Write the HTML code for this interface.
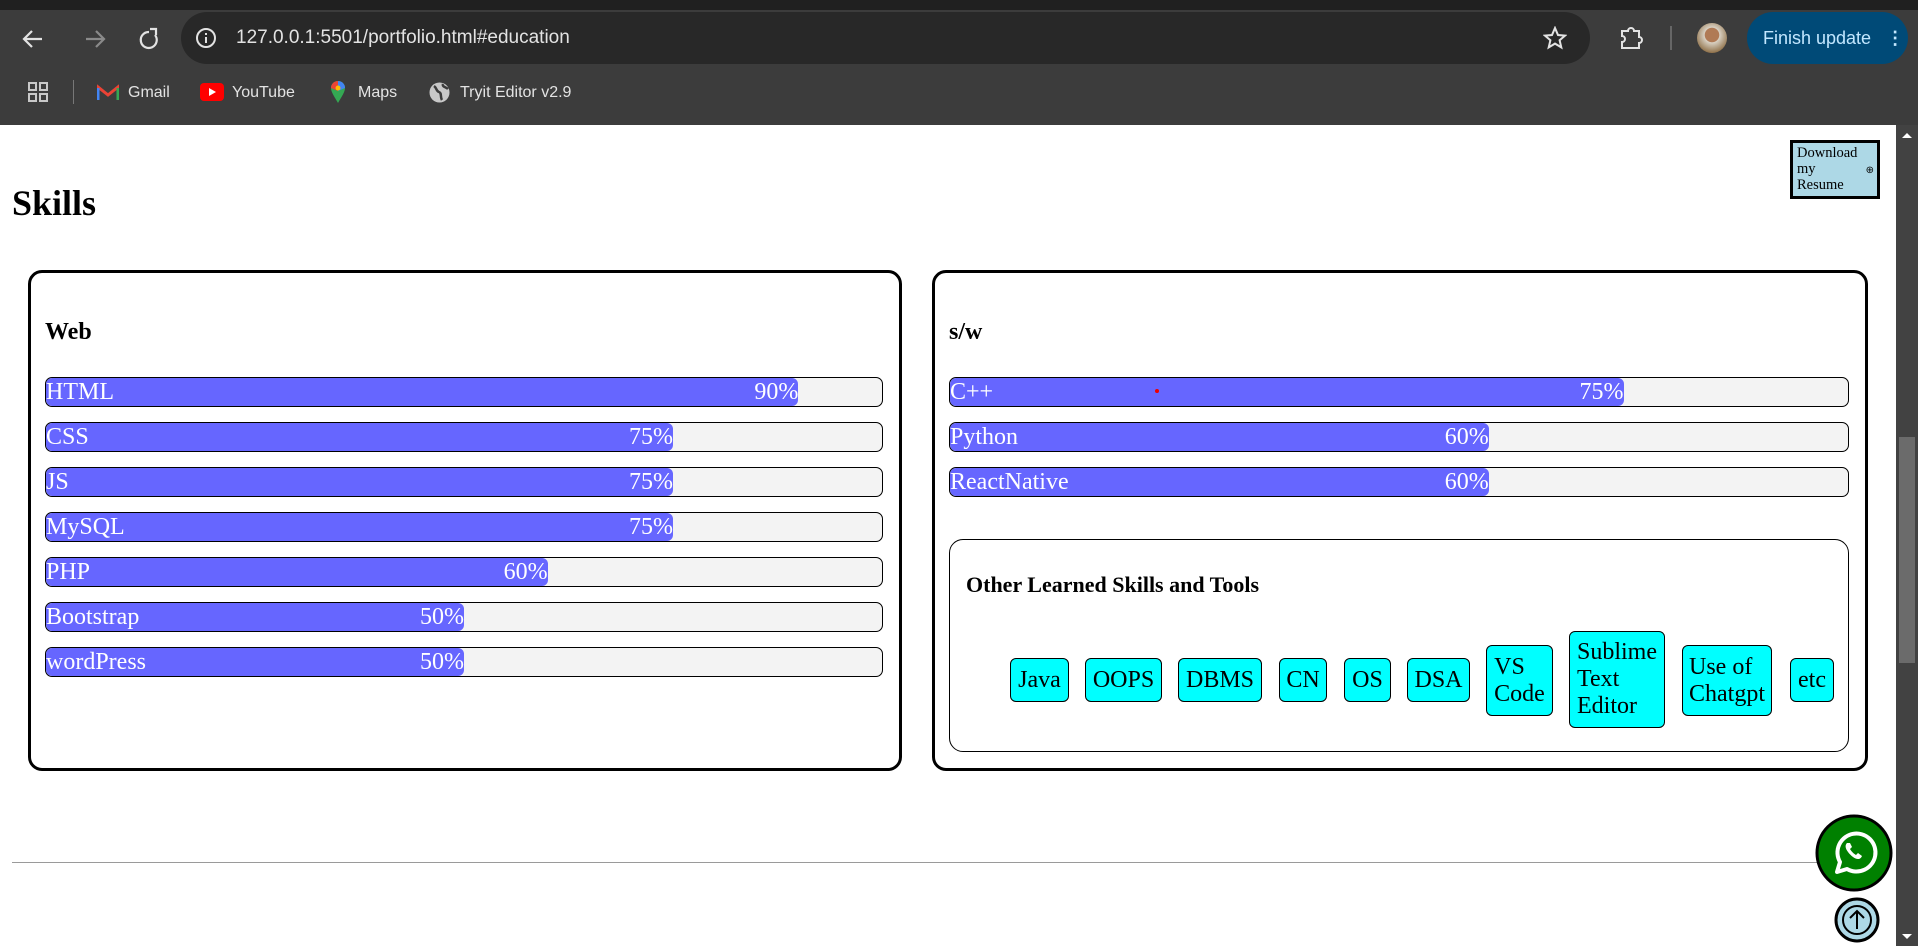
<!DOCTYPE html>
<html><head><meta charset="utf-8"><style>
*{box-sizing:border-box;margin:0;padding:0}
body{width:1918px;height:946px;overflow:hidden;background:#fff;font-family:"Liberation Serif",serif;position:relative}
.abs{position:absolute}
.chrome{left:0;top:0;width:1918px;height:125px;background:#3c3c3c}
.tabstrip{left:0;top:0;width:1918px;height:10px;background:#202020}
.omni{left:181px;top:12px;width:1409px;height:52px;border-radius:26px;background:#282828}
.url{left:236px;top:27px;color:#e3e3e3;font-family:"Liberation Sans",sans-serif;font-size:19px}
.bm{top:84px;color:#e3e3e3;font-family:"Liberation Sans",sans-serif;font-size:16px}
.upd{left:1747px;top:12px;width:161px;height:52px;border-radius:26px;background:#004a77;color:#c2e7ff;font-family:"Liberation Sans",sans-serif;font-size:18px;line-height:52px;padding-left:16px}
.card{border:3px solid #000;border-radius:14px;top:270px;height:501px}
.bar{height:30px;border:1px solid #000;border-radius:7px;background:#f3f3f3;overflow:hidden}
.fill{height:100%;background:#6666ff;color:#fff;font-size:24px;line-height:29px;position:relative;border-radius:6px 6px 6px 6px}
.fill .l{position:absolute;left:0;top:0}
.fill .r{position:absolute;right:0;top:0}
.tag{background:#00ffff;border:1px solid #000;border-radius:6px;font-size:24px;line-height:27px;display:flex;align-items:center;justify-content:center;text-align:left;padding:0 6px}
</style></head><body>
<div class="abs chrome"></div>
<div class="abs tabstrip"></div>
<svg class="abs" style="left:20px;top:26px" width="160" height="26" viewBox="0 0 160 26">
<path d="M22 13H4M12 5l-8 8 8 8" stroke="#e3e3e3" stroke-width="2.2" fill="none"/>
<path d="M66 13h18M76 5l8 8-8 8" stroke="#8a8a8a" stroke-width="2.2" fill="none"/>
<path d="M129 6a8 8 0 1 0 6 3" stroke="#e3e3e3" stroke-width="2.2" fill="none"/><path d="M130 3h6v6" stroke="#e3e3e3" stroke-width="2.2" fill="none"/>
</svg>
<div class="abs omni"></div>
<svg class="abs" style="left:195px;top:27px" width="22" height="22"><circle cx="11" cy="11" r="9" stroke="#e3e3e3" stroke-width="2" fill="none"/><path d="M11 10v6M11 6v2" stroke="#e3e3e3" stroke-width="2"/></svg>
<div class="abs url">127.0.0.1:5501/portfolio.html#education</div>
<svg class="abs" style="left:1543px;top:26px" width="24" height="24"><path d="M12 2l3 7 7 .6-5.4 4.6 1.7 7.2L12 17.6 5.7 21.4l1.7-7.2L2 9.6 9 9z" stroke="#e3e3e3" stroke-width="2" fill="none"/></svg>
<svg class="abs" style="left:1618px;top:25px" width="26" height="26"><path d="M4 6h6a3 3 0 0 1 6 0h5v6a3 3 0 0 1 0 6v5H4v-6a3 3 0 0 0 0-6z" stroke="#e3e3e3" stroke-width="2" fill="none"/></svg>
<div class="abs" style="left:1670px;top:26px;width:2px;height:24px;background:#666"></div>
<div class="abs" style="left:1697px;top:23px;width:30px;height:30px;border-radius:50%;background:radial-gradient(circle at 50% 40%,#b07a55 0 30%,#d9d1c4 32%,#8a6a40 80%)"></div>
<div class="abs upd">Finish update <span style="margin-left:10px;font-weight:bold">⋮</span></div>
<svg class="abs" style="left:28px;top:82px" width="20" height="20"><g fill="none" stroke="#c8c8c8" stroke-width="2"><rect x="1" y="1" width="7" height="7"/><rect x="12" y="1" width="7" height="7"/><rect x="1" y="12" width="7" height="7"/><rect x="12" y="12" width="7" height="7"/></g></svg>
<div class="abs" style="left:73px;top:80px;width:1px;height:24px;background:#777"></div>
<svg class="abs" style="left:97px;top:84px" width="22" height="17"><path d="M1 16V3l10 8 10-8v13" fill="none" stroke="#ea4335" stroke-width="3"/><path d="M1 16V4" stroke="#4285f4" stroke-width="3"/><path d="M21 16V4" stroke="#34a853" stroke-width="3"/></svg>
<div class="abs bm" style="left:128px">Gmail</div>
<svg class="abs" style="left:200px;top:83px" width="24" height="18"><rect width="24" height="18" rx="4" fill="#f00"/><path d="M9 5v8l7-4z" fill="#fff"/></svg>
<div class="abs bm" style="left:232px">YouTube</div>
<svg class="abs" style="left:330px;top:80px" width="16" height="24"><path d="M8 23C4 16 1 12 1 8a7 7 0 0 1 14 0c0 4-3 8-7 15z" fill="#34a853"/><path d="M1 8a7 7 0 0 1 7-7v10z" fill="#ea4335"/><path d="M15 8a7 7 0 0 0-7-7v10z" fill="#4285f4"/><circle cx="8" cy="8" r="2.5" fill="#fbbc04"/></svg>
<div class="abs bm" style="left:358px">Maps</div>
<svg class="abs" style="left:429px;top:82px" width="21" height="21"><circle cx="10.5" cy="10.5" r="10" fill="#c8c8c8"/><path d="M5 4c3 2 2 5 5 6s1 5 3 8M14 2c-1 3 3 3 5 5" stroke="#3c3c3c" stroke-width="2.5" fill="none"/></svg>
<div class="abs bm" style="left:460px">Tryit Editor v2.9</div>

<div class="abs" style="left:1896px;top:125px;width:22px;height:821px;background:#424242"></div>
<div class="abs" style="left:1899px;top:437px;width:16px;height:226px;background:#6b6b6b"></div>
<svg class="abs" style="left:1900px;top:130px" width="14" height="10"><path d="M2 8h10L7 3z" fill="#fff"/></svg>
<svg class="abs" style="left:1900px;top:932px" width="14" height="10"><path d="M2 2h10L7 7z" fill="#fff"/></svg>

<div class="abs" style="left:12px;top:182px;font-size:36px;font-weight:bold">Skills</div>
<div class="abs" style="left:1790px;top:140px;width:90px;height:59px;border:3px solid #000;background:#add8e6;font-size:14.5px;line-height:16px;padding:2px 0 0 4px">Download<br>my<br>Resume<span style="position:absolute;right:3px;top:20px;font-size:10px">⊕</span></div>

<div class="abs card" style="left:28px;width:874px"></div>
<div class="abs card" style="left:932px;width:936px"></div>
<div class="abs" style="left:45px;top:319px;font-size:24px;font-weight:bold">Web</div>
<div class="abs" style="left:949px;top:319px;font-size:24px;font-weight:bold">s/w</div>

<div class="abs bar" style="left:45px;top:377px;width:838px"><div class="fill" style="width:90%"><span class="l">HTML</span><span class="r">90%</span></div></div>
<div class="abs bar" style="left:45px;top:422px;width:838px"><div class="fill" style="width:75%"><span class="l">CSS</span><span class="r">75%</span></div></div>
<div class="abs bar" style="left:45px;top:467px;width:838px"><div class="fill" style="width:75%"><span class="l">JS</span><span class="r">75%</span></div></div>
<div class="abs bar" style="left:45px;top:512px;width:838px"><div class="fill" style="width:75%"><span class="l">MySQL</span><span class="r">75%</span></div></div>
<div class="abs bar" style="left:45px;top:557px;width:838px"><div class="fill" style="width:60%"><span class="l">PHP</span><span class="r">60%</span></div></div>
<div class="abs bar" style="left:45px;top:602px;width:838px"><div class="fill" style="width:50%"><span class="l">Bootstrap</span><span class="r">50%</span></div></div>
<div class="abs bar" style="left:45px;top:647px;width:838px"><div class="fill" style="width:50%"><span class="l">wordPress</span><span class="r">50%</span></div></div>

<div class="abs bar" style="left:949px;top:377px;width:900px"><div class="fill" style="width:75%"><span class="l">C++</span><span class="r">75%</span></div></div>
<div class="abs bar" style="left:949px;top:422px;width:900px"><div class="fill" style="width:60%"><span class="l">Python</span><span class="r">60%</span></div></div>
<div class="abs bar" style="left:949px;top:467px;width:900px"><div class="fill" style="width:60%"><span class="l">ReactNative</span><span class="r">60%</span></div></div>
<div class="abs" style="left:1155px;top:389px;width:4px;height:4px;border-radius:50%;background:#e00"></div>

<div class="abs" style="left:949px;top:539px;width:900px;height:213px;border:1px solid #000;border-radius:14px"></div>
<div class="abs" style="left:966px;top:572px;font-size:22px;font-weight:bold">Other Learned Skills and Tools</div>
<div class="abs tag" style="left:1010px;top:658px;width:59px;height:44px">Java</div>
<div class="abs tag" style="left:1085px;top:658px;width:77px;height:44px">OOPS</div>
<div class="abs tag" style="left:1178px;top:658px;width:84px;height:44px">DBMS</div>
<div class="abs tag" style="left:1279px;top:658px;width:48px;height:44px">CN</div>
<div class="abs tag" style="left:1344px;top:658px;width:47px;height:44px">OS</div>
<div class="abs tag" style="left:1407px;top:658px;width:63px;height:44px">DSA</div>
<div class="abs tag" style="left:1486px;top:645px;width:67px;height:71px">VS<br>Code</div>
<div class="abs tag" style="left:1569px;top:631px;width:96px;height:97px">Sublime<br>Text<br>Editor</div>
<div class="abs tag" style="left:1682px;top:645px;width:90px;height:71px">Use of<br>Chatgpt</div>
<div class="abs tag" style="left:1790px;top:658px;width:44px;height:44px">etc</div>

<div class="abs" style="left:12px;top:862px;width:1810px;height:1px;background:#9a9a9a"></div>
<svg class="abs" style="left:1815px;top:814px" width="78" height="78" viewBox="0 0 78 78">
<circle cx="39" cy="39" r="37" fill="#008000" stroke="#000" stroke-width="3"/>
<path d="M22 58l3-10a19 19 0 1 1 7 7z" fill="none" stroke="#fff" stroke-width="4" stroke-linejoin="round"/>
<path d="M32 29c-2 2-2 5 1 9s7 7 10 7c2 0 3-1 4-3l-4-3-2 2c-2-1-5-4-6-6l2-2-2-4z" fill="#fff"/>
</svg>
<svg class="abs" style="left:1834px;top:897px" width="46" height="46" viewBox="0 0 46 46">
<circle cx="23" cy="23" r="21" fill="#add8e6" stroke="#000" stroke-width="3"/>
<circle cx="23" cy="23" r="14" fill="none" stroke="#000" stroke-width="2"/>
<path d="M23 32V15M16 21l7-7 7 7" fill="none" stroke="#000" stroke-width="2"/>
</svg>
</body></html>
